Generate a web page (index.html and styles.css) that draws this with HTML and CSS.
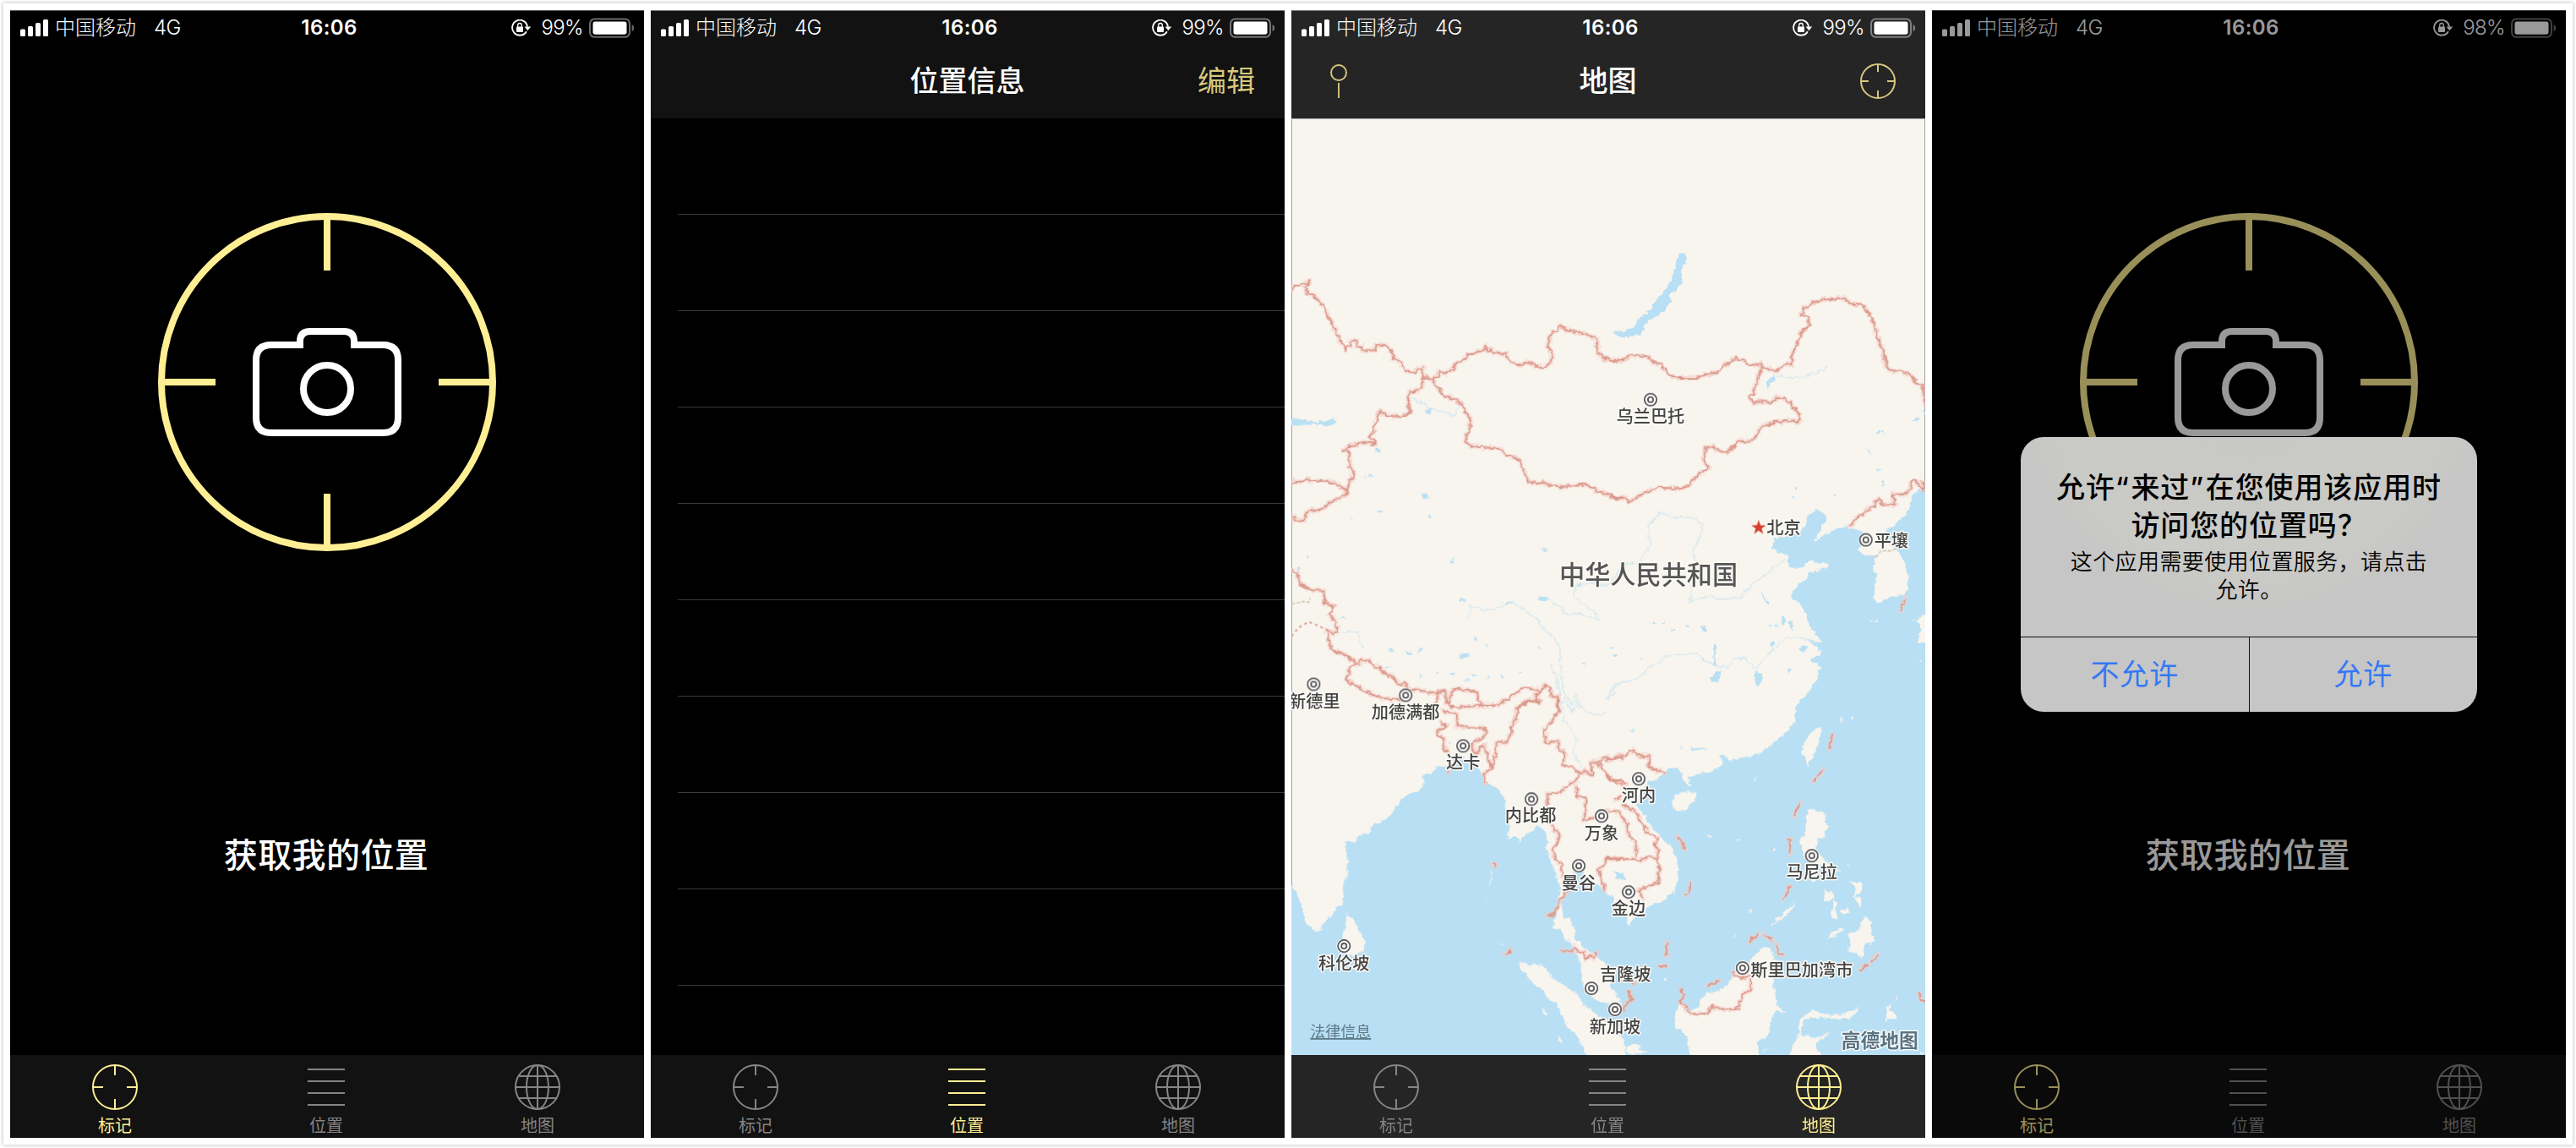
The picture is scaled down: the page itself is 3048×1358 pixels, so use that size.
FILE: index.html
```html
<!DOCTYPE html>
<html lang="zh-CN">
<head>
<meta charset="utf-8">
<title>来过</title>
<link rel="stylesheet" href="styles.css">
</head>
<body>
<svg class="sprite" aria-hidden="true">
  <symbol id="i-signal" viewBox="0 0 33 20"><rect x="0" y="11.5" width="6" height="8.5" rx="1.6"/><rect x="9" y="8" width="6" height="12" rx="1.6"/><rect x="18" y="4" width="6" height="16" rx="1.6"/><rect x="27" y="0" width="6" height="20" rx="1.6"/></symbol>
  <symbol id="i-lock" viewBox="0 0 24 20"><path d="M17.9 14.2A9 9 0 1 1 19 8.6" fill="none" stroke="currentColor" stroke-width="1.8"/><path d="M15.6 8.6h7.6l-3.8 4.6z"/><rect x="6" y="8.4" width="8" height="6.6" rx="1"/><path d="M7.7 9V6.8a2.3 2.3 0 0 1 4.6 0V9" fill="none" stroke="currentColor" stroke-width="1.3"/></symbol>
  <symbol id="i-battery" viewBox="0 0 54 24"><rect x="1" y="1.4" width="47" height="21.4" rx="5.5" fill="none" stroke="currentColor" stroke-opacity=".42" stroke-width="2"/><rect x="4.5" y="4.5" width="40" height="15.2" rx="2.4"/><path d="M50.6 8q2.6 1 2.6 4t-2.6 4z" fill-opacity=".42"/></symbol>
  <symbol id="i-aim" viewBox="0 0 54 54"><g fill="none" stroke="currentColor" stroke-width="2"><circle cx="27" cy="27" r="26"/><path d="M27 1v12M27 53V41M1 27h12M53 27H41"/></g></symbol>
  <symbol id="i-aim-small" viewBox="0 0 42 42"><g fill="none" stroke="currentColor" stroke-width="2"><circle cx="21" cy="21" r="20"/><path d="M21 1v9M21 41v-9M1 21h9M41 21h-9"/></g></symbol>
  <symbol id="i-pin" viewBox="0 0 20 42"><g fill="none" stroke="currentColor" stroke-width="1.9"><circle cx="10" cy="11" r="9"/><path d="M10 23v18"/></g></symbol>
  <symbol id="i-list" viewBox="0 0 54 54"><path d="M5 6h44M5 20h44M5 34h44M5 48h44" fill="none" stroke="currentColor" stroke-width="2"/></symbol>
  <symbol id="i-globe" viewBox="0 0 54 54"><g fill="none" stroke="currentColor" stroke-width="2"><circle cx="27" cy="27" r="26"/><ellipse cx="27" cy="27" rx="13" ry="26"/><path d="M27 1v52M1 27h52M5 14h44M5 40h44"/></g></symbol>
  <symbol id="i-target" viewBox="0 0 400 400"><g fill="none" stroke-width="8"><g stroke="#ffef94"><circle cx="200" cy="200" r="196"/><path d="M200 4v64M200 396v-64M4 200h64M396 200h-64"/></g><g stroke="#fff"><path d="M168 156V152Q168 140 180 140H220Q232 140 232 152V156M172 156H134Q116 156 116 174V242Q116 260 134 260H266Q284 260 284 242V174Q284 156 266 156H228"/><circle cx="200" cy="208" r="28"/></g></g></symbol>
  <symbol id="i-city" viewBox="-10 -10 20 20"><circle r="9" fill="#fff"/><circle r="7.2" fill="#fff" stroke="#555" stroke-width="1.8"/><circle r="3.1" fill="none" stroke="#555" stroke-width="1.8"/></symbol>
</svg>

<main class="board">
  <section class="phone">
    <header class="status">
      <div class="status-left"><svg class="signal"><use href="#i-signal"/></svg><span class="carrier">中国移动</span><span class="net">4G</span></div>
      <time class="clock">16:06</time>
      <div class="status-right"><svg class="lock"><use href="#i-lock"/></svg><span class="percent">99%</span><svg class="battery"><use href="#i-battery"/></svg></div>
    </header>
    <div class="capture">
      <svg class="target"><use href="#i-target"/></svg>
      <p class="capture-label">获取我的位置</p>
    </div>
    <nav class="tabs">
      <a class="tab on"><svg><use href="#i-aim"/></svg><span>标记</span></a>
      <a class="tab"><svg><use href="#i-list"/></svg><span>位置</span></a>
      <a class="tab"><svg><use href="#i-globe"/></svg><span>地图</span></a>
    </nav>
  </section>

  <section class="phone phone-list">
    <div class="top">
      <header class="status">
        <div class="status-left"><svg class="signal"><use href="#i-signal"/></svg><span class="carrier">中国移动</span><span class="net">4G</span></div>
        <time class="clock">16:06</time>
        <div class="status-right"><svg class="lock"><use href="#i-lock"/></svg><span class="percent">99%</span><svg class="battery"><use href="#i-battery"/></svg></div>
      </header>
      <div class="navbar"><span></span><h1>位置信息</h1><a class="edit">编辑</a></div>
    </div>
    <ul class="rows"><li></li><li></li><li></li><li></li><li></li><li></li><li></li><li></li><li></li></ul>
    <nav class="tabs">
      <a class="tab"><svg><use href="#i-aim"/></svg><span>标记</span></a>
      <a class="tab on"><svg><use href="#i-list"/></svg><span>位置</span></a>
      <a class="tab"><svg><use href="#i-globe"/></svg><span>地图</span></a>
    </nav>
  </section>

  <section class="phone phone-map">
    <div class="top">
      <header class="status">
        <div class="status-left"><svg class="signal"><use href="#i-signal"/></svg><span class="carrier">中国移动</span><span class="net">4G</span></div>
        <time class="clock">16:06</time>
        <div class="status-right"><svg class="lock"><use href="#i-lock"/></svg><span class="percent">99%</span><svg class="battery"><use href="#i-battery"/></svg></div>
      </header>
      <div class="navbar"><svg class="pin"><use href="#i-pin"/></svg><h1>地图</h1><svg class="aim"><use href="#i-aim-small"/></svg></div>
    </div>
    <svg class="map" viewBox="1528 140 750 1108">
      <defs>
        <!-- roughens coastlines and frontiers -->
        <filter id="rough" filterUnits="userSpaceOnUse" x="1520" y="132" width="770" height="1130" color-interpolation-filters="sRGB">
          <feTurbulence type="fractalNoise" baseFrequency=".16" numOctaves="2" seed="4" result="n"/>
          <feDisplacementMap in="SourceGraphic" in2="n" scale="7" xChannelSelector="R" yChannelSelector="G"/>
        </filter>
        <g id="borders">
          <g transform="translate(1520 280) scale(.33333 .35714)">
            <path d="M24 174L30 163 54 158 60 150 78 155 88 140 84 158 70 165 74 176 108 198 138 230 215 374 218 364 232 362 230 344 258 344 256 360 272 362 274 374 320 374 322 360 345 356 364 360 384 382 384 402 412 412 416 428 430 442 460 448 476 434 492 431 488 448 496 462 520 470 544 460 546 446 570 450 600 436 602 420 642 404 644 388 672 386 688 376 706 374 712 362 716 374 736 372 738 383 788 383 792 408 836 424 855 414 892 424 912 430 940 422 952 388 934 360 940 332 950 312 968 310 978 290 990 300 1016 312 1044 314 1106 332 1112 380 1136 402 1158 408 1204 406"/>
            <path d="M496 462L492 468 488 494 470 506 444 512 436 526 444 580 414 595 366 590 336 576 304 662 320 684 282 678 234 690 208 706 228 712 230 754 244 776 240 800 228 806 222 842 180 814 120 806 86 804 42 810 10 814M222 842L220 852 186 866 156 882 126 904 80 906 70 938 34 938 36 924 10 928"/>
            <path d="M528 470L528 484 544 502 562 520 580 530 612 540 630 552 640 580 658 600 656 640 644 658 648 684 668 692 760 700 790 722 836 738 854 790 876 815 912 812 948 822 992 826 1060 820 1096 830 1106 842 1134 848 1178 866 1204 860"/>
            <path d="M24 1104L46 1112 52 1150 104 1170 138 1170 142 1210 172 1224 158 1250 182 1276 184 1306 168 1312 148 1300 162 1360 180 1376 204 1378 250 1408 266 1416 270 1398 296 1402 318 1420 344 1434 366 1454 378 1448 402 1482 424 1474 428 1490 450 1500 500 1504 536 1512 560 1504 570 1500 574 1544 582 1540 592 1508 610 1496 654 1502 684 1508 686 1524 702 1552 760 1550 804 1522 850 1492 894 1500 912 1502 926 1482 940 1496 950 1522 970 1524 972 1568"/>
            <path d="M250 1408L230 1430 216 1466 252 1486 290 1506 346 1528 420 1532M574 1544L592 1558 702 1552M546 1508L536 1550M820 1566L864 1536 904 1542 890 1522 912 1502"/>
          </g>
          <g transform="translate(1900 280) scale(.33333 .35714)">
            <path d="M0 404L18 407 52 408 94 390 122 392 158 400 168 416 196 418 206 436 226 456 256 466 302 466 326 466 350 456 400 446 420 426 460 400 488 408 510 424 546 420 580 438 604 444 634 424 660 418 664 382 684 346 692 318 722 290 718 258 694 258 702 240 728 218 778 204 808 206 822 200 852 206 870 220 910 224 932 246 950 278 968 340 986 374 998 430 1012 442 1044 442 1080 456 1108 484 1124 488 1134 546M556 428L534 480 522 518 510 526 526 550 552 540 586 550 606 530 630 532 660 554 690 590 684 612 652 606 588 616 552 626 540 654 520 674 470 676 434 712 400 708 384 694 356 694 346 736 366 766 330 784 294 824 264 832 184 830 144 844 84 876 66 862 38 864 0 850"/>
            <path d="M1150 812L1124 810 1130 838 1114 826 1098 802 1086 808 1084 832 1060 852 1018 852 1028 886 984 884 970 864 956 878 954 892 932 900 920 914 892 930 866 956M1066 1196L1048 1236"/>
          </g>
          <g transform="translate(1520 800) scale(.33333 .35587)">
            <path d="M970 64L970 116 944 158 922 176 926 220 972 214 976 244 998 256 984 294 1020 300 1050 324 1066 312 1092 330 1088 284 1112 288 1130 270 1160 272 1200 270M1050 324L1034 346 1002 366 970 388 934 390 930 430M1034 366L1040 398 1068 402 1070 440 1060 480 1102 466 1140 448M1112 288L1140 318 1160 342 1200 360M948 494L976 528 966 560 948 580 962 606 984 626 984 664M1004 712L980 744 966 774 946 794 928 794M1200 604L1144 606 1130 630 1114 640 1124 672 1138 714M985 913L1022 912 1030 900 1040 912 1062 918 1066 940 1082 928 1098 938 1108 918"/>
            <path d="M820 110L830 98 864 80 892 76 904 86 892 62M826 104L820 140 802 170 804 190 784 220 752 218 748 258 738 300 724 286 718 252 706 230 692 234 688 256 666 246 664 222 710 200 712 176 700 170 614 166 610 126 582 120 558 112M554 152L576 164 542 180 542 194 566 206 564 240 578 250M738 300L706 324 712 352M582 312L584 320M736 624L750 628M782 924L804 910"/>
          </g>
          <g transform="translate(1900 800) scale(.33333 .35587)">
            <path d="M0 282L30 268 74 262 98 244 110 260 158 266 150 296 174 312 208 320M0 322L20 348 52 344 70 360M34 410L54 396M64 428L104 450 150 520 186 540 174 562 190 574 180 606 154 600 122 612 96 606 0 606M10 446L44 448 76 490 78 520 108 556 108 600M180 606L190 640 186 686 142 700 116 712 132 736M256 530L282 574M300 686L298 714 284 728M216 884L216 930M190 964L216 964M98 1024L104 1014M80 1042L92 1074 58 1108M268 1038L274 1070 264 1084 308 1124 360 1120 378 1098 434 1110 472 1102 488 1056 514 1038 514 996 476 1002 450 982M356 1028L386 1022 404 1012M510 884L544 852M562 860L590 876M604 890L612 918 628 928M900 974L932 960M942 948L966 924M1114 1052L1114 1076 1150 1078M806 188L794 240M772 310L736 352M692 420L668 464M654 540L654 590M654 698L630 742"/>
          </g>
        </g>
      </defs>
      <rect class="land" x="1528" y="140" width="750" height="1108"/>
      <g filter="url(#rough)">
      <g class="sea">
        <g transform="translate(1520 280) scale(.33333 .35714)">
          <path d="M10 598L60 602 100 612 140 608 170 598 186 606 180 618 150 628 120 616 80 622 10 620ZM1168 310H1200V328H1186ZM496 572L512 564 522 570 518 582 502 584ZM320 702L330 696 344 706 338 712 322 710ZM484 852L500 848 516 862 486 862ZM512 920H520V930H512ZM328 906H350V911H332ZM226 936L238 930 248 938ZM280 792H290L284 800ZM303 788H311V795H303ZM912 1032L930 1032 934 1042 918 1044ZM580 1072L602 1068 602 1080ZM622 1198L646 1200 642 1208 628 1206ZM898 1190L936 1192 938 1200 920 1206 900 1200ZM778 1214L800 1204 814 1208 790 1218ZM428 1370L450 1374 454 1384 432 1384ZM470 1384L480 1358 492 1362 482 1376ZM622 1380L660 1378 640 1396 624 1396ZM370 1364L388 1366 386 1374 374 1374ZM356 1420L372 1426 362 1430ZM660 1448L690 1448 668 1456ZM634 1470L650 1462 652 1468 640 1474ZM584 1444H604V1450H584ZM1036 1156L1052 1142 1056 1146 1042 1160ZM44 1094H54V1104H44ZM198 1257H212V1264H198ZM672 1330H684V1337H672ZM712 1350H722V1357H712ZM72 1055H84V1062ZM540 1440L552 1448H542ZM478 1448L488 1456H478ZM766 1453H775V1460H766ZM830 1440H839V1447H830ZM900 1360H914L904 1367ZM716 1458L728 1452V1460ZM1058 1410H1072L1062 1418ZM1158 1360H1166V1367H1158ZM1169 1383H1177V1390H1169Z"/>
        </g>
        <g transform="translate(1900 280) scale(.33333 .35714)">
          <path d="M262 52L284 54 286 66 276 94 270 140 260 164 230 192 228 216 208 244 164 274 136 290 126 318 94 326 64 332 38 326 28 314 64 312 98 300 120 268 156 238 190 202 224 154 246 104 250 70ZM570 484L582 462 602 456 602 474 576 502ZM550 1180L560 1184 584 1214 576 1218ZM684 1360L700 1350 716 1360 708 1376 690 1372ZM620 1266L634 1256 644 1276 626 1282ZM650 1270L668 1286 668 1300 652 1288ZM372 1460L390 1440 412 1436 402 1468 376 1474ZM528 1436L556 1446 556 1466 544 1490 532 1484ZM582 1344L600 1344 596 1356ZM640 1438L656 1432 656 1442ZM338 1288L354 1284 356 1314 344 1306ZM920 698L946 710 942 716ZM962 766H978V774H962ZM964 642H974V650H964ZM980 642H990V650H980ZM980 804H988V812H980ZM980 818H988V825H980ZM1090 608L1096 596 1118 598 1100 606ZM1128 576H1134V590H1124ZM669 828H679V835H669ZM808 848H817V855H808ZM660 862H674L664 869ZM168 1277H176V1284H168ZM200 1277H208V1284H200ZM232 1300H244V1307H232ZM282 1287H290V1294H282ZM380 1348H392L388 1390 396 1420 384 1420ZM18 1360H26V1367H18ZM28 1383H37V1390H28ZM125 1393H133V1400H125ZM600 1284H612L606 1292ZM574 1286H582V1293H574ZM338 1390L352 1396 348 1406Z"/>
          <path d="M672 1568L700 1525 740 1486 755 1456 752 1440 770 1430 745 1410 725 1400 760 1385 766 1370 740 1355 720 1332 765 1340 745 1315 725 1290 715 1256 705 1235 690 1215 657 1196 664 1180 680 1155 700 1138 722 1126 720 1112 752 1102 792 1094 786 1080 756 1080 722 1070 706 1090 680 1098 650 1090 642 1050 612 1046 595 1030 594 1000 640 990 690 980 710 950 724 920 744 905 770 910 786 932 770 960 756 980 740 1010 770 990 800 975 826 962 850 960 890 968 920 984 912 1014 892 1040 920 1054 960 1056 950 1100 962 1130 950 1190 964 1216 984 1204 1010 1192 1058 1188 1074 1162 1072 1110 1060 1070 1036 1040 1000 1000 990 975 1040 940 1080 904 1084 862 1112 838 1150 842V1568Z"/>
        </g>
        <g transform="translate(1520 800) scale(.33333 .35587)">
          <path d="M6 690L24 700 45 722 60 770 75 815 90 832 110 847 135 838 140 812 165 800 185 765 205 760 205 705 218 670 223 620 215 570 222 548 250 550 265 528 300 520 310 496 345 480 380 455 420 405 450 388 480 380 495 355 490 328 520 318 545 292 560 306 572 298 584 316 600 270 630 262 660 288 690 305 710 350 740 362 772 388 785 420 790 480 800 496 788 540 815 530 835 548 860 520 885 515 895 492 915 510 930 525 930 575 945 620 965 660 1015 664 1026 646 1060 650 1085 680 1120 698 1145 724V1275H6ZM584 218H592V226H584ZM1168 646L1186 654 1200 656 1200 676 1180 672Z"/>
        </g>
        <g transform="translate(1900 800) scale(.33333 .35587)">
          <path d="M0 715L24 736 50 780 76 800 78 828 104 802 150 765 200 745 245 715 258 660 250 600 235 570 200 540 160 498 128 450 110 424 130 380 150 350 180 344 215 310 240 304 270 316 280 345 304 368 290 335 330 325 370 318 420 290 400 260 428 264 440 280 480 270 520 262 550 252 580 232 620 200 652 176 674 150 672 110 700 70 740 30 755 0H1150V1275H0ZM28 648L66 668 64 680 40 672ZM370 8L390 0 406 10 396 18 374 14ZM265 230L275 234V240H265ZM304 238L358 238V244H306ZM84 180L98 174V182Z"/>
        </g>
      </g>
      <g class="rivers">
        <g transform="translate(1520 280) scale(.33333 .35714)">
          <path d="M654 1266L658 1224 688 1226 700 1234 750 1230 770 1220 808 1206 850 1236 890 1260 920 1300 950 1318 974 1356 978 1420 988 1500 1020 1552 1032 1516 1050 1550M446 534L490 550 520 570 560 576 600 590 620 560M936 1194L958 1216 984 1222 990 1250 1050 1246 1114 1268 1108 1246 1070 1226 1028 1190 1032 1160 1080 1142 1150 1158M198 1308L258 1308 266 1340 280 1362M942 1416L962 1450 976 1500M1200 1476L1174 1480 1170 1510 1142 1530"/>
        </g>
        <g transform="translate(1900 280) scale(.33333 .35714)">
          <path d="M0 1160L70 1086 120 1074 156 1020 152 960 192 912 250 930 300 926 344 950 342 980 310 1036 318 1080 298 1210 M298 1210L310 1200 370 1190 400 1198 480 1194 530 1142 580 1110 640 1066M608 460L650 464 700 464 770 440 790 422M0 1530L36 1478 110 1466 150 1430 220 1388 320 1376 350 1402 388 1420 430 1424 466 1390 500 1402 536 1430 580 1380 640 1326 690 1326 760 1350" />
        </g>
        <g transform="translate(1520 800) scale(.33333 .35587)">
          <path d="M966 0L968 40 986 90 988 140 1026 190 1040 210 1024 250 1052 300M990 70L1020 120 1036 90 1096 130 1140 120"/>
        </g>
      </g>
      <g class="land">
        <g transform="translate(1520 800) scale(.33333 .35587)">
          <path d="M960 630L975 700 970 780 954 810 954 838 975 840 1000 870 1020 900 1040 922 1050 980 1060 1030 1080 1060 1110 1078 1150 1088 1175 1106 1196 1088 1182 1060 1156 1030 1156 980 1136 950 1100 924 1060 902 1038 880 1028 836 1014 806 990 800 982 755 1000 712 1026 650Z"/>
          <path d="M832 948L870 960 920 962 950 1000 990 1026 1040 1056 1060 1090 1100 1118 1140 1145 1180 1190 1205 1210 1212 1275H1082L1050 1215 1010 1170 985 1130 970 1090 930 1065 915 1040 880 1015 860 992 835 972Z"/>
          <path d="M222 790L240 800 265 845 285 878 280 910 250 928 225 926 210 900 207 870 215 820ZM912 1104L928 1116 934 1130 918 1122ZM966 1192L976 1196 986 1216 972 1212ZM850 1050L876 1066 866 1062ZM730 646L734 640 730 690 726 706ZM712 742L716 748 714 756ZM766 884L772 888 768 894ZM216 786L224 790V796ZM1210 1232L1240 1220 1270 1230 1260 1242 1300 1252 1220 1256Z"/>
        </g>
        <g transform="translate(1900 800) scale(.33333 .35587)">
          <path d="M234 412L265 385 300 382 326 388 314 410 290 440 262 450 238 437ZM765 172L750 170 722 195 697 235 700 256 722 298 728 272 750 240 760 210ZM716 444L740 440 776 452 778 482 790 500 776 530 754 542 748 580 780 612 800 620 840 650 816 646 764 624 740 684 722 670 728 620 700 590 688 540 708 530ZM868 682L906 686 908 714 888 730 908 740 906 770 884 730 888 700ZM776 710L812 720 806 740 776 748ZM808 745L822 748 818 780 824 806 804 804 796 780 810 770ZM836 780L862 768 866 782 842 790ZM922 794L944 820 942 850 956 880 940 890 918 888 916 930 898 930 884 916 858 912 870 886 862 856 900 840ZM774 912L790 856 826 840 840 830 844 846 812 862 790 868ZM582 832L620 796 674 748 664 768 630 800 590 830ZM860 618L866 620 864 634ZM825 146L838 134 842 142 832 150ZM870 134L880 132 878 142ZM525 340H535V346H525ZM364 530H374V537H364ZM464 540H475V547H464ZM590 578L600 570 604 580ZM506 778H518L512 788ZM450 866L466 856 456 868ZM210 1004H217V1012H210Z"/>
          <path d="M262 1084L300 1112 328 1100 336 1076 350 1055 400 1046 440 1012 460 985 500 960 540 918 560 900 590 910 600 940 625 958 602 985 595 1030 605 1090 645 1120 600 1112 596 1130 585 1170 570 1200 540 1215 545 1275H300L290 1200 250 1165 245 1130ZM686 1150L700 1130 735 1110 800 1125 850 1120 900 1100 870 1138 800 1138 740 1134 704 1142 692 1188 740 1204 800 1185 746 1216 750 1238 775 1275H655L675 1200 690 1188ZM996 1110L1014 1088 1008 1110 1030 1126 1036 1140 1012 1136 998 1150ZM1030 1070L1036 1062V1080ZM1000 1180L1034 1186 1030 1190ZM550 1250L590 1232 570 1245ZM1116 1256L1120 1248 1130 1256Z"/>
        </g>
        <g transform="translate(1900 280) scale(.33333 .35714)">
          <path d="M1084 1274L1110 1270 1120 1252 1150 1248V1342L1114 1344 1108 1320 1122 1300 1110 1278ZM942 1272L968 1262 966 1270ZM1116 1400H1121V1406H1116Z"/>
        </g>
      </g>
      <use href="#borders" class="border-halo"/>
      <use href="#borders" class="border-line"/>
      </g>
      <path class="disputed" d="M1528 714l14-3 6 1 2-5"/>
      <path class="disputed red" d="M1528 752l8-10 12-7 12 5 10 5"/>
      <path class="disputed" d="M2220 659l6-8h12l6-3"/>
      <path class="star" transform="translate(2081 623.5)" d="M0-9L2.2-2.8 8.7-2.8 3.5 1.1 5.4 7.4 0 3.6-5.4 7.4-3.5 1.1-8.7-2.8-2.2-2.8Z"/>
      <g>
        <use href="#i-city" x="1943" y="462" width="20" height="20"/><use href="#i-city" x="2198" y="628" width="20" height="20"/>
        <use href="#i-city" x="1544" y="799" width="20" height="20"/><use href="#i-city" x="1653" y="812" width="20" height="20"/>
        <use href="#i-city" x="1721" y="872" width="20" height="20"/><use href="#i-city" x="1802" y="935" width="20" height="20"/>
        <use href="#i-city" x="1885" y="955" width="20" height="20"/><use href="#i-city" x="1858" y="1014" width="20" height="20"/>
        <use href="#i-city" x="1929" y="911" width="20" height="20"/><use href="#i-city" x="1917" y="1045" width="20" height="20"/>
        <use href="#i-city" x="2134" y="1002" width="20" height="20"/><use href="#i-city" x="2052" y="1135" width="20" height="20"/>
        <use href="#i-city" x="1873" y="1159" width="20" height="20"/><use href="#i-city" x="1901" y="1184" width="20" height="20"/>
        <use href="#i-city" x="1580" y="1109" width="20" height="20"/>
      </g>
      <text class="country" x="1845" y="690">中华人民共和国</text>
      <g class="places">
        <text x="1953" y="499">乌兰巴托</text>
        <text x="1555" y="836.5">新德里</text>
        <text x="1663" y="849.5">加德满都</text>
        <text x="1731" y="909">达卡</text>
        <text x="1811" y="972">内比都</text>
        <text x="1895" y="992.5">万象</text>
        <text x="1868" y="1051.5">曼谷</text>
        <text x="1939" y="948">河内</text>
        <text x="1927" y="1082">金边</text>
        <text x="2144" y="1039">马尼拉</text>
        <text x="1911" y="1221.5">新加坡</text>
        <text x="1590" y="1146.5">科伦坡</text>
        <text class="beside" x="2090.5" y="631.5">北京</text>
        <text class="beside" x="2218" y="646.5">平壤</text>
        <text class="beside" x="2071.5" y="1154.5">斯里巴加湾市</text>
        <text class="beside" x="1893" y="1160">吉隆坡</text>
      </g>
      <text class="legal" x="1550" y="1227">法律信息</text>
      <text class="maker" x="2179" y="1238.5">高德地图</text>
    </svg>
    <nav class="tabs">
      <a class="tab"><svg><use href="#i-aim"/></svg><span>标记</span></a>
      <a class="tab"><svg><use href="#i-list"/></svg><span>位置</span></a>
      <a class="tab on"><svg><use href="#i-globe"/></svg><span>地图</span></a>
    </nav>
  </section>

  <section class="phone">
    <header class="status">
      <div class="status-left"><svg class="signal"><use href="#i-signal"/></svg><span class="carrier">中国移动</span><span class="net">4G</span></div>
      <time class="clock">16:06</time>
      <div class="status-right"><svg class="lock"><use href="#i-lock"/></svg><span class="percent">98%</span><svg class="battery"><use href="#i-battery"/></svg></div>
    </header>
    <div class="capture">
      <svg class="target"><use href="#i-target"/></svg>
      <p class="capture-label">获取我的位置</p>
    </div>
    <nav class="tabs">
      <a class="tab on"><svg><use href="#i-aim"/></svg><span>标记</span></a>
      <a class="tab"><svg><use href="#i-list"/></svg><span>位置</span></a>
      <a class="tab"><svg><use href="#i-globe"/></svg><span>地图</span></a>
    </nav>
    <div class="scrim">
      <div class="alert" role="alertdialog">
        <div class="alert-body">
          <h2>允许<q>来过</q>在您使用该应用时<br>访问您的位置吗？</h2>
          <p>这个应用需要使用位置服务，请点击<br>允许。</p>
        </div>
        <div class="alert-actions"><a>不允许</a><a>允许</a></div>
      </div>
    </div>
  </section>
</main>
</body>
</html>
```
FILE: styles.css
```css
* { box-sizing: border-box; margin: 0; padding: 0; }

body {
  background: #fff;
  font-family: Inter, "Noto Sans CJK SC", sans-serif;
  color: #fff;
  padding: 4px;
}

.sprite { position: absolute; width: 0; height: 0; }
svg { display: block; flex: none; fill: currentColor; }

.board {
  display: flex;
  gap: 8px;
  width: 3040px;
  height: 1350px;
  padding: 8px;
  background: #fff;
  box-shadow: 0 0 5px rgba(0, 0, 0, .3);
}

.phone {
  --bar: #121212;
  position: relative;
  display: flex;
  flex-direction: column;
  width: 750px;
  height: 1334px;
  background: #000;
  box-shadow: inset 0 1px #555;
}
.phone-map { --bar: #252525; }
.top { background: var(--bar); box-shadow: inset 0 1px #777; }

/* status bar */
.status {
  display: grid;
  grid-template-columns: 1fr auto 1fr;
  align-items: center;
  height: 40px;
  padding: 0 11px 0 12px;
  font-size: 24px;
  line-height: 42px;
}
.status-left, .status-right { display: flex; align-items: center; }
.status-right { justify-content: flex-end; }
.signal { width: 33px; height: 20px; margin-right: 8px; }
.carrier { font-weight: 300; }
.net { margin-left: 21px; font-weight: 300; letter-spacing: -.6px; }
.clock { font-weight: 600; font-size: 24px; letter-spacing: .4px; padding-left: 4px; }
.lock { width: 24px; height: 20px; margin-right: 11px; }
.percent { font-weight: 300; letter-spacing: -.6px; margin-right: 7px; }
.battery { width: 54px; height: 24px; }

/* navigation bar */
.navbar {
  display: grid;
  grid-template-columns: 1fr auto 1fr;
  align-items: center;
  height: 88px;
  padding: 0 35px 0 46px;
  color: #d6c97e;
}
.navbar h1 { font-size: 34px; font-weight: 500; line-height: 88px; color: #fff; margin-right: 12px; }
.edit { justify-self: end; font-size: 34px; font-weight: 400; line-height: 88px; }
.pin { width: 20px; height: 42px; }
.aim { width: 42px; height: 42px; justify-self: end; }

/* capture screen */
.capture { flex: 1; display: flex; flex-direction: column; align-items: center; padding-top: 200px; }
.target { width: 400px; height: 400px; }
.capture-label { margin-top: 331px; font-size: 40px; line-height: 58px; font-weight: 500; letter-spacing: .4px; margin-right: 2px; }

/* list screen */
.rows { flex: 1; list-style: none; }
.rows li { height: 114px; margin-left: 32px; border-bottom: 1px solid #3a3a3a; }

/* tab bar */
.tabs {
  display: grid;
  grid-template-columns: repeat(3, 250px);
  height: 98px;
  background: var(--bar);
}
.tab {
  display: flex;
  flex-direction: column;
  align-items: center;
  gap: 4px;
  padding: 11px 2px 0 0;
  color: #858585;
  font-size: 20px;
  line-height: 30px;
}
.tab.on { color: #ffef94; }
.tab svg { width: 54px; height: 54px; }

/* map */
.map { width: 750px; height: 1108px; border-top: 1px solid #aaa; overflow: hidden; }
.land { fill: #f8f5ee; }
.sea { fill: #b8dff4; fill-rule: evenodd; }
.rivers { fill: none; stroke: #cfe6f0; stroke-width: 1.2; }
.rivers path, #borders path { vector-effect: non-scaling-stroke; }
.border-halo { fill: none; stroke: #f5cfc6; stroke-opacity: .6; stroke-width: 6; stroke-linejoin: round; stroke-linecap: round; }
.border-line { fill: none; stroke: #d9978a; stroke-width: 2; stroke-linejoin: round; }
.disputed { fill: none; stroke: #c8baa5; stroke-width: 1.4; stroke-dasharray: 4 2; }
.disputed.red { stroke: #d9978a; stroke-width: 2; stroke-dasharray: 3 4; }
.star { fill: #d8402b; }
.country { font-size: 30.2px; font-weight: 500; fill: #555; stroke: #fbf9f4; stroke-width: 3px; paint-order: stroke; }
.places { font-size: 20.2px; font-weight: 500; fill: #444; stroke: #fbfaf6; stroke-width: 3px; stroke-linejoin: round; paint-order: stroke; text-anchor: middle; }
.places .beside { text-anchor: start; }
.legal { font-size: 18px; fill: #5f7b89; text-decoration: underline; }
.maker { font-size: 22.8px; font-weight: 700; fill: #5b7482; stroke: #fff; stroke-width: 2.5px; paint-order: stroke; }

/* permission alert */
.scrim {
  position: absolute;
  inset: 0;
  display: flex;
  justify-content: center;
  align-items: flex-start;
  padding-top: 505px;
  background: rgba(0, 0, 0, .4);
}
.alert {
  display: flex;
  flex-direction: column;
  width: 540px;
  height: 325px;
  border-radius: 27px;
  background: radial-gradient(circle at 50% -20%, #c8c8c7 0, #cacac6 220px, #c6c6c6 280px);
  color: #000;
  text-align: center;
  overflow: hidden;
}
.alert-body { flex: 1; padding-top: 37px; }
.alert h2 { font-size: 34px; font-weight: 500; line-height: 45px; letter-spacing: .9px; }
.alert q { quotes: "“" "”"; }
.alert q::before, .alert q::after { letter-spacing: 2.5px; }
.alert p { margin-top: 4px; font-size: 26px; font-weight: 350; line-height: 33px; letter-spacing: .4px; }
.alert-actions { display: flex; height: 89px; border-top: 1px solid #111; }
.alert-actions a { flex: 1; font-size: 34px; line-height: 88px; letter-spacing: .8px; color: #3478f6; }
.alert-actions a + a { border-left: 1px solid #111; }
```
